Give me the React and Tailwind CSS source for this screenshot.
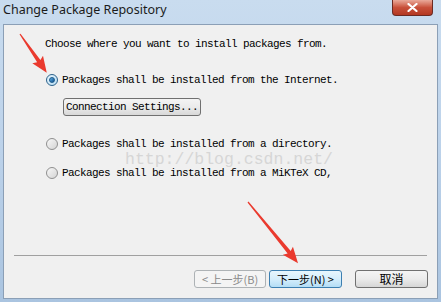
import React from "react";

const mono = { fontFamily: '"Liberation Mono", "Noto Sans CJK SC", monospace' };

function Radio({ checked }) {
  return checked ? (
    <span className="w-[12px] h-[12px] rounded-full border border-[#2c628b] bg-gradient-to-br from-[#e6f5fd] to-[#b8dcf2] flex items-center justify-center shrink-0">
      <span className="w-[6px] h-[6px] rounded-full bg-gradient-to-br from-[#5fb3e8] to-[#0d4f8c] border border-[#1d5a8a]" />
    </span>
  ) : (
    <span className="w-[12px] h-[12px] rounded-full border border-[#8f8f8f] bg-gradient-to-br from-[#f8f8f8] to-[#d4d4d4] shrink-0" />
  );
}

function Arrow({ x, y, len, angle }) {
  const L = len;
  const pts = `0,-0.6 ${L - 14},-2 ${L - 16},-6.5 ${L},0 ${L - 16},6.5 ${L - 14},2 0,0.6`;
  return (
    <polygon
      points={pts}
      fill="#ea3a2e"
      transform={`translate(${x} ${y}) rotate(${angle})`}
    />
  );
}

export default function App() {
  return (
    <div className="relative w-[441px] h-[302px] overflow-hidden flex flex-col bg-gradient-to-b from-[#c9dcef] via-[#bcd2ea] to-[#aac4e0]">
      {/* title bar */}
      <div className="h-[24px] flex items-start justify-between pl-[3px] pr-[8px]">
        <span
          className="text-[12.5px] leading-[20px] text-[#1b1b1b]"
          style={{ fontFamily: '"Noto Sans", "Open Sans", sans-serif' }}
        >
          Change Package Repository
        </span>
        <span className="w-[41px] h-[16px] rounded-b-[4px] border border-t-0 border-[#6b2a22] bg-gradient-to-b from-[#e9a99a] via-[#c8503a] to-[#b33822] flex items-center justify-center">
          <svg width="11" height="9" viewBox="0 0 11 9">
            <path d="M1.5 1 L9.5 8 M9.5 1 L1.5 8" stroke="#fff" strokeWidth="2.2" strokeLinecap="round" />
          </svg>
        </span>
      </div>

      {/* client area */}
      <div className="relative flex-1 mx-[3px] mb-[3px] border border-[#8b9fb6] bg-[#f0f0f0] flex flex-col" style={mono}>
        {/* watermark */}
        <span className="absolute left-[121px] top-[128px] text-[16.5px] leading-[14px] text-[#d6d6d6] pointer-events-none" style={mono}>
          http://blog.csdn.net/
        </span>

        <div className="relative pl-[41px] pt-[13px] text-[11px] leading-[12px] tracking-[-0.6px] text-black">
          Choose where you want to install packages from.
        </div>

        <div className="relative flex items-center gap-[4px] pl-[42px] mt-[24px] h-[12px] text-[11px] tracking-[-0.6px] text-black">
          <Radio checked />
          <span>Packages shall be installed from the Internet.</span>
        </div>

        <div className="relative pl-[59px] mt-[8px]">
          <button className="w-[138px] h-[18px] rounded-[3px] border border-[#707070] bg-gradient-to-b from-[#f4f4f4] via-[#ebebeb] to-[#d8d8d8] text-[11px] tracking-[-0.6px] text-black leading-[16px]" style={mono}>
            Connection Settings...
          </button>
        </div>

        <div className="relative flex items-center gap-[4px] pl-[42px] mt-[20px] h-[12px] text-[11px] tracking-[-0.6px] text-black">
          <Radio />
          <span>Packages shall be installed from a directory.</span>
        </div>

        <div className="relative flex items-center gap-[4px] pl-[42px] mt-[17px] h-[12px] text-[11px] tracking-[-0.6px] text-black">
          <Radio />
          <span>Packages shall be installed from a MiKTeX CD,</span>
        </div>

        <div className="flex-1" />

        <div className="mx-[10px] h-[2px] border-t border-[#a0a0a0] border-b-white" />

        <div className="flex justify-end items-center gap-[3px] pr-[9px] pt-[13px] pb-[10px]" style={{ fontFamily: '"Noto Sans CJK SC", sans-serif' }}>
          <button className="w-[72px] h-[18px] rounded-[3px] border border-[#adb2b5] bg-[#f4f4f4] text-[11px] leading-[16px] text-[#8a8a8a]">
            &lt; 上一步(B)
          </button>
          <button className="w-[73px] h-[18px] rounded-[3px] border border-[#3c7fb1] bg-gradient-to-b from-[#e8f6fd] via-[#d5eefc] to-[#b4ddf5] text-[11px] leading-[16px] text-black">
            下一步(N) &gt;
          </button>
          <button className="ml-[10px] w-[73px] h-[18px] rounded-[3px] border border-[#707070] bg-gradient-to-b from-[#f4f4f4] via-[#ebebeb] to-[#d6d6d6] text-[12px] leading-[16px] text-black">
            取消
          </button>
        </div>
      </div>

      {/* annotation arrows */}
      <svg className="absolute inset-0 pointer-events-none" width="441" height="302">
        <Arrow x={20} y={34} len={47} angle={55.3} />
        <Arrow x={248} y={202} len={79} angle={50.7} />
      </svg>
    </div>
  );
}
